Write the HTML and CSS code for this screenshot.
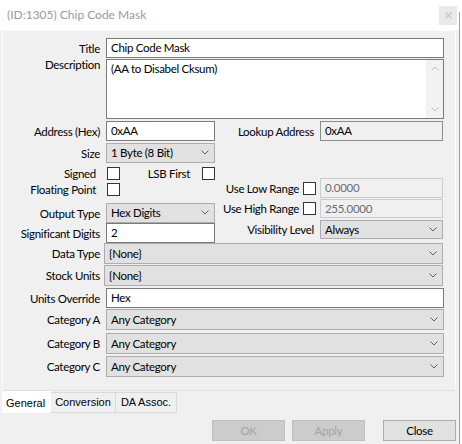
FILE: index.html
```html
<!DOCTYPE html>
<html>
<head>
<meta charset="utf-8">
<title>Chip Code Mask</title>
<link rel="stylesheet" href="styles.css">
</head>
<body>
<div class="window">
  <div class="main">
    <div class="titlebar">
      <span class="title">(ID:1305) Chip Code Mask</span>
      <span class="close"><svg width="7" height="7" viewBox="0 0 7 7"><path d="M0.5 0.5 L6.5 6.5 M6.5 0.5 L0.5 6.5" stroke="#c6c6c6" stroke-width="1.3" fill="none"/></svg></span>
    </div>
    <div class="body">
      <div class="panel">
        <div class="row r-title"><span class="lbl">Title</span><div class="tb wide">Chip Code Mask</div></div>
        <div class="row r-desc">
          <span class="lbl lbl-top">Description</span>
          <div class="tb wide area">
            <div class="area-text">(AA to Disabel Cksum)</div>
            <div class="vscroll">
              <svg width="8" height="5" viewBox="0 0 8 5"><polyline points="0.5,4.5 4,1 7.5,4.5" fill="none" stroke="#bdbdbd" stroke-width="1"/></svg>
              <svg width="8" height="5" viewBox="0 0 8 5"><polyline points="0.5,0.5 4,4 7.5,0.5" fill="none" stroke="#bdbdbd" stroke-width="1"/></svg>
            </div>
          </div>
        </div>
        <div class="split">
          <div class="col-left">
            <div class="row r-addr"><span class="lbl">Address (Hex)</span><div class="tb narrow">0xAA</div></div>
            <div class="row r-size"><span class="lbl">Size</span><div class="combo narrow"><span>1 Byte (8 Bit)</span><svg class="chev" width="8" height="5" viewBox="0 0 8 5"><polyline points="0.5,0.5 4,4 7.5,0.5" fill="none" stroke="#606060" stroke-width="1"/></svg></div></div>
            <div class="row r-signed"><span class="lbl lbl-chk">Signed</span><span class="chk"></span><span class="lsb">LSB First</span><span class="chk"></span></div>
            <div class="row r-float"><span class="lbl lbl-chk">Floating Point</span><span class="chk"></span></div>
            <div class="row r-output"><span class="lbl">Output Type</span><div class="combo narrow"><span>Hex Digits</span><svg class="chev" width="8" height="5" viewBox="0 0 8 5"><polyline points="0.5,0.5 4,4 7.5,0.5" fill="none" stroke="#606060" stroke-width="1"/></svg></div></div>
            <div class="row r-sig"><span class="lbl">Significant Digits</span><div class="tb narrow">2</div></div>
          </div>
          <div class="col-right">
            <div class="row r-lookup"><span class="rlbl">Lookup Address</span><div class="tb ro rctl">0xAA</div></div>
            <div class="row r-low"><span class="rlbl rlbl-chk"><span>Use Low Range</span><span class="chk"></span></span><div class="tb dis rctl">0.0000</div></div>
            <div class="row r-high"><span class="rlbl rlbl-chk"><span>Use High Range</span><span class="chk"></span></span><div class="tb dis rctl">255.0000</div></div>
            <div class="row r-vis"><span class="rlbl">Visibility Level</span><div class="combo rctl"><span>Always</span><svg class="chev" width="8" height="5" viewBox="0 0 8 5"><polyline points="0.5,0.5 4,4 7.5,0.5" fill="none" stroke="#606060" stroke-width="1"/></svg></div></div>
          </div>
        </div>
        <div class="row r-dt"><span class="lbl lbl-near">Data Type</span><div class="combo wide2"><span>{None}</span><svg class="chev" width="8" height="5" viewBox="0 0 8 5"><polyline points="0.5,0.5 4,4 7.5,0.5" fill="none" stroke="#606060" stroke-width="1"/></svg></div></div>
        <div class="row r-su"><span class="lbl lbl-near">Stock Units</span><div class="combo wide2"><span>{None}</span><svg class="chev" width="8" height="5" viewBox="0 0 8 5"><polyline points="0.5,0.5 4,4 7.5,0.5" fill="none" stroke="#606060" stroke-width="1"/></svg></div></div>
        <div class="row r-uo"><span class="lbl">Units Override</span><div class="tb wide">Hex</div></div>
        <div class="row r-ca"><span class="lbl">Category A</span><div class="combo wide"><span>Any Category</span><svg class="chev" width="8" height="5" viewBox="0 0 8 5"><polyline points="0.5,0.5 4,4 7.5,0.5" fill="none" stroke="#606060" stroke-width="1"/></svg></div></div>
        <div class="row r-cb"><span class="lbl">Category B</span><div class="combo wide"><span>Any Category</span><svg class="chev" width="8" height="5" viewBox="0 0 8 5"><polyline points="0.5,0.5 4,4 7.5,0.5" fill="none" stroke="#606060" stroke-width="1"/></svg></div></div>
        <div class="row r-cc"><span class="lbl">Category C</span><div class="combo wide"><span>Any Category</span><svg class="chev" width="8" height="5" viewBox="0 0 8 5"><polyline points="0.5,0.5 4,4 7.5,0.5" fill="none" stroke="#606060" stroke-width="1"/></svg></div></div>
      </div>
      <div class="tabs">
        <div class="tab tab-active">General</div>
        <div class="tab tab-conv">Conversion</div>
        <div class="tab tab-da">DA Assoc.</div>
      </div>
      <div class="buttons">
        <div class="btn btn-dis btn-ok">OK</div>
        <div class="btn btn-dis btn-apply">Apply</div>
        <div class="btn">Close</div>
      </div>
    </div>
  </div>
  <div class="edge"></div>
</div>
</body>
</html>
```

FILE: styles.css
```css
* { box-sizing: border-box; }

html, body {
  margin: 0;
  padding: 0;
}

body {
  width: 462px;
  height: 444px;
  overflow: hidden;
  background: #ffffff;
  font-family: Lato, "Open Sans", sans-serif;
  font-size: 11.5px;
  letter-spacing: -0.3px;
  color: #000;
}

.window {
  display: flex;
  height: 444px;
}

.main {
  width: 459px;
  display: flex;
  flex-direction: column;
}

.edge {
  width: 1px;
  margin-top: 12px;
  background: #a0a0a0;
}

/* title bar */
.titlebar {
  height: 30px;
  background: #fff;
  display: flex;
  align-items: flex-start;
  padding-left: 7px;
}

.title {
  line-height: 30px;
  font-size: 12px;
  letter-spacing: 0;
  color: #9a9a9a;
}

.close {
  margin-left: auto;
  margin-right: 2px;
  margin-top: 6px;
  width: 18px;
  height: 19px;
  background: #e9e9e9;
  display: flex;
  align-items: center;
  justify-content: center;
}

/* body */
.body {
  flex: 1;
  background: #f0f0f0;
}

.panel {
  margin-left: 2px;
  width: 454px;
  height: 361px;
  border: 1px solid #fbfbfb;
  border-bottom-color: #e0e0e0;
  background: #f0f0f0;
  padding-top: 7px;
}

.row {
  display: flex;
  align-items: center;
}

.lbl {
  width: 97px;
  margin-right: 6px;
  text-align: right;
  white-space: nowrap;
  flex: none;
}

.lbl-top {
  align-self: flex-start;
  margin-top: -2px;
  line-height: 15px;
}

.lbl-near {
  margin-right: 4px;
}

.lbl-chk {
  padding-right: 4px;
  margin-right: 7px;
}

.tb {
  height: 20px;
  background: #fff;
  border: 1px solid #7a7a7a;
  display: flex;
  align-items: center;
  padding: 0 0 1px 4px;
  white-space: nowrap;
  flex: none;
}

.wide { width: 338px; }
.wide2 { width: 339px; }
.narrow { width: 109px; }

.area {
  height: 60px;
  align-items: stretch;
  padding: 0;
}

.area-text {
  flex: 1;
  padding: 1px 0 0 4px;
  line-height: 15px;
}

.vscroll {
  width: 17px;
  background: #f2f2f2;
  display: flex;
  flex-direction: column;
  justify-content: space-between;
  align-items: center;
  padding: 6px 0 6px 1px;
}

.combo {
  height: 20px;
  background: #e1e1e1;
  border: 1px solid #adadad;
  display: flex;
  align-items: center;
  padding: 0 0 1px 4px;
  white-space: nowrap;
  flex: none;
}

.combo.wide, .combo.wide2 { height: 21px; }

.chev {
  margin-left: auto;
  margin-right: 5px;
  display: block;
}

.chk {
  width: 13px;
  height: 13px;
  border: 1px solid #333;
  background: #fff;
  flex: none;
}

.lsb {
  width: 71px;
  text-align: right;
  margin-right: 12px;
  white-space: nowrap;
}

/* split section */
.split {
  display: flex;
  margin-top: 2px;
}

.col-left {
  width: 212px;
  flex: none;
}

.col-right {
  flex: 1;
}

.r-title { height: 20px; }
.r-desc { margin-top: 1px; height: 60px; align-items: flex-start; }
.r-addr { height: 20px; }
.r-size { margin-top: 2px; height: 20px; }
.r-signed { margin-top: 4px; height: 13px; }
.r-float { margin-top: 3px; height: 13px; }
.r-output { margin-top: 7px; height: 20px; }
.r-sig { height: 20px; }

.rlbl {
  width: 101px;
  margin-right: 4px;
  text-align: right;
  padding-right: 2px;
  white-space: nowrap;
  flex: none;
}

.rlbl-chk {
  display: flex;
  justify-content: flex-end;
  align-items: center;
  padding-right: 0;
}

.rlbl-chk span:first-child {
  margin-right: 4px;
}

.rctl { width: 123px; }

.tb.ro {
  background: #f0f0f0;
  border-color: #8c8c8c;
}

.tb.dis {
  background: #f0f0f0;
  border-color: #cccccc;
  color: #6d6d6d;
}

.r-lookup { height: 20px; }
.r-low { margin-top: 37px; height: 20px; }
.r-high { margin-top: 1px; height: 19px; }
.r-high .tb { height: 19px; }
.r-vis { margin-top: 2px; height: 19px; }
.r-vis .combo { height: 19px; }

.r-dt { height: 21px; }
.r-su { margin-top: 1px; height: 21px; }
.r-uo { margin-top: 2px; height: 20px; }
.r-ca { margin-top: 1px; height: 21px; }
.r-cb { margin-top: 3px; height: 21px; }
.r-cc { margin-top: 2px; height: 21px; }

/* tabs */
.tabs {
  display: flex;
  margin-left: 2px;
  height: 22px;
  font-family: "Liberation Sans", Arial, sans-serif;
  font-size: 11px;
  letter-spacing: 0;
}

.tab {
  white-space: nowrap;
}

.tab-active {
  width: 49px;
  height: 22px;
  background: #fff;
  padding: 3px 0 0 4px;
  line-height: 19px;
}

.tab-conv, .tab-da {
  height: 21px;
  margin-top: 1px;
  border: 1px solid #d9d9d9;
  border-left: none;
  background: #f0f0f0;
  line-height: 18px;
  text-align: center;
}

.tab-conv { width: 65px; }
.tab-da { width: 61px; }

/* buttons */
.buttons {
  display: flex;
  justify-content: flex-end;
  margin-top: 7px;
  padding-right: 3px;
}

.btn {
  width: 73px;
  height: 21px;
  background: #e1e1e1;
  border: 1px solid #adadad;
  display: flex;
  align-items: center;
  justify-content: center;
  padding-bottom: 1px;
}

.btn-dis {
  background: #cccccc;
  border-color: #bfbfbf;
  color: #a3a3a3;
}

.btn-ok { margin-right: 7px; }
.btn-apply { margin-right: 18px; }
```
